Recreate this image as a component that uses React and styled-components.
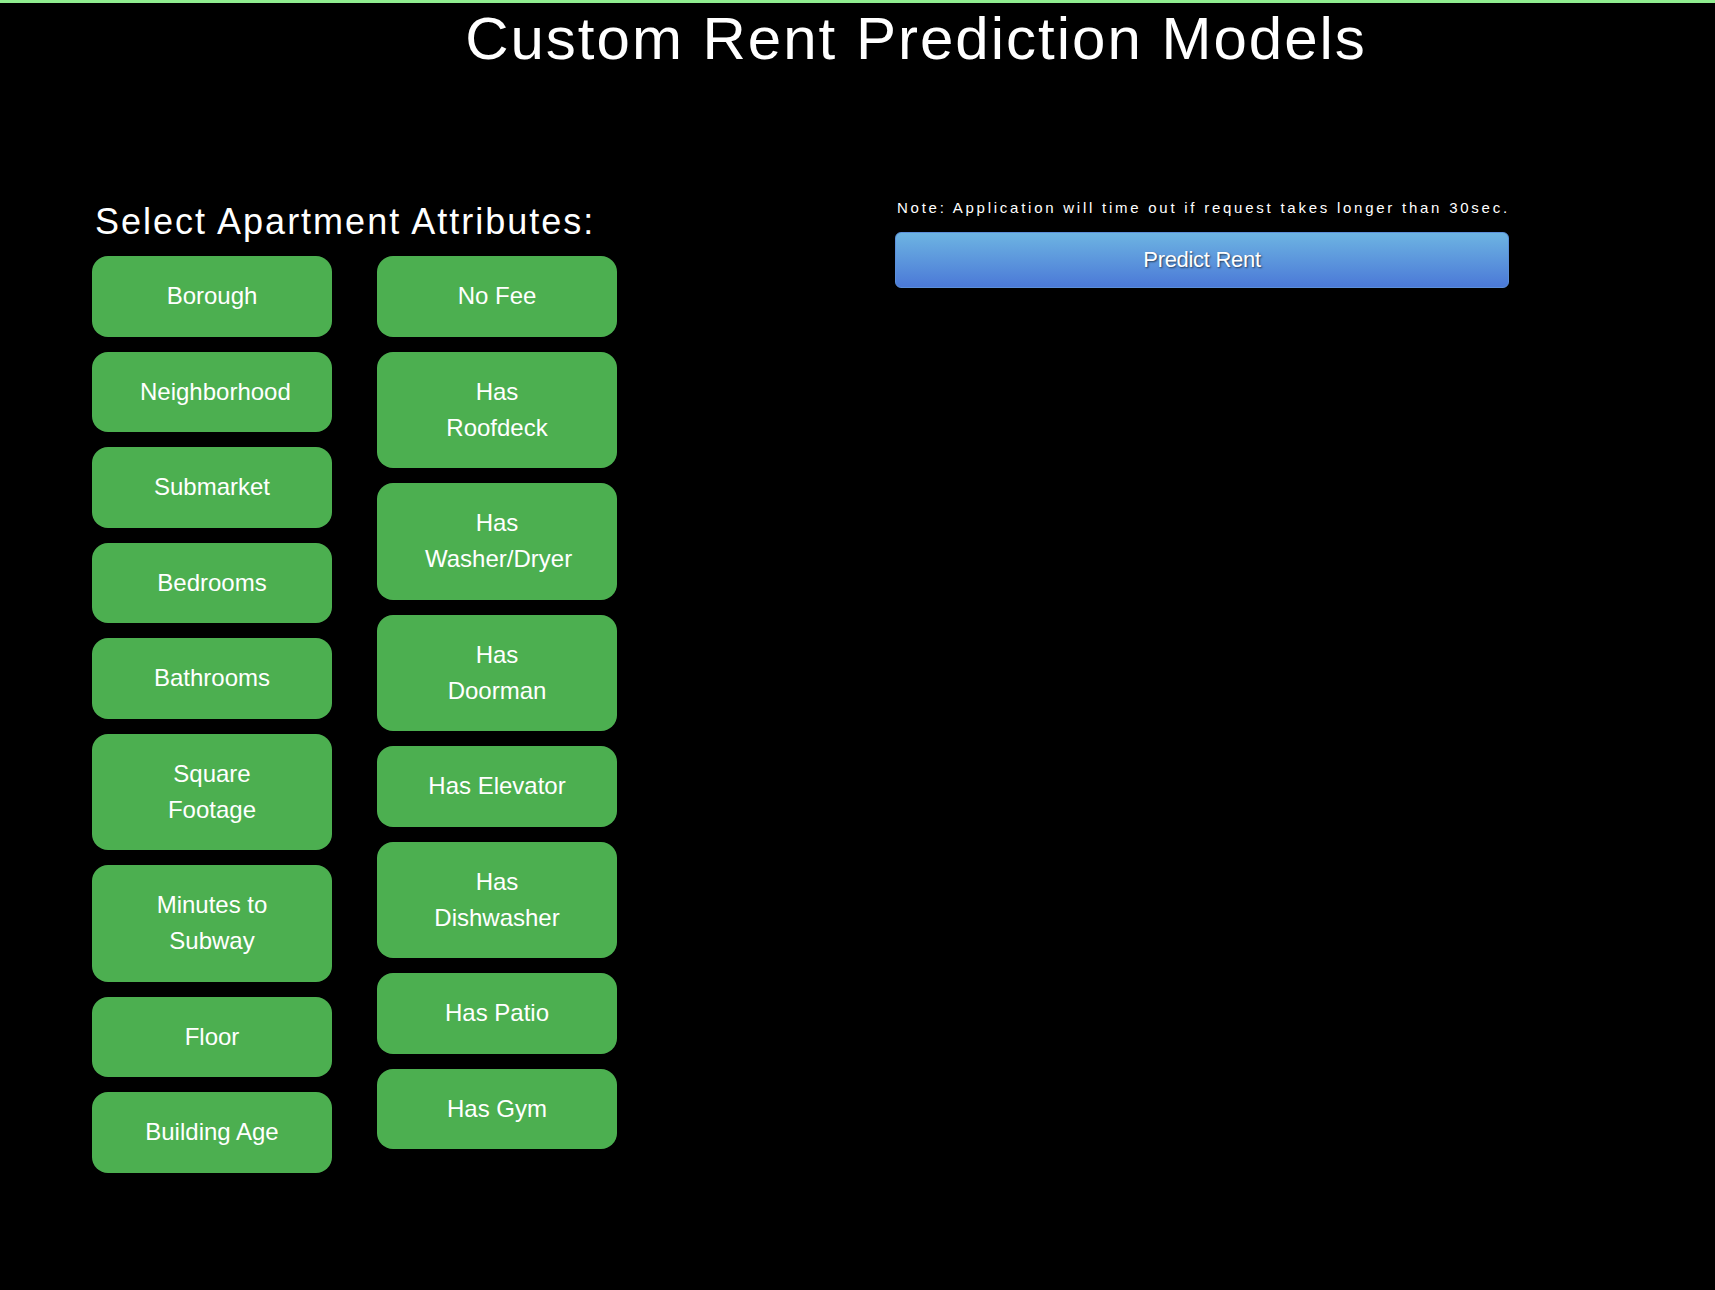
import React from 'react';
import styled, { createGlobalStyle } from 'styled-components';

const GlobalStyle = createGlobalStyle`
  html, body {
    margin: 0;
    padding: 0;
    background: #000000;
  }

  body {
    font-family: 'Liberation Sans', Arial, sans-serif;
    color: #ffffff;
  }
`;

const Page = styled.div`
  min-height: 1290px;
  background: #000000;
  border-top: 3px solid #90ee90;
  box-sizing: border-box;
`;

const Title = styled.h1`
  margin: 0;
  padding-left: 117px;
  font-size: 60px;
  font-weight: normal;
  line-height: 72px;
  letter-spacing: 2px;
  text-align: center;
`;

const Main = styled.div`
  display: flex;
  align-items: flex-start;
  gap: 278px;
  padding: 0 0 0 92px;
  margin-top: 125px;
`;

const Attributes = styled.section`
  display: flex;
  flex-direction: column;
`;

const Heading = styled.h2`
  margin: 0 0 13px 3px;
  font-size: 36px;
  font-weight: normal;
  line-height: 43px;
  letter-spacing: 2px;
`;

const Columns = styled.div`
  display: flex;
  align-items: flex-start;
  gap: 45px;
`;

const Column = styled.div`
  display: flex;
  flex-direction: column;
  gap: 15px;
  width: 240px;
`;

const AttrButton = styled.button`
  box-sizing: border-box;
  width: 240px;
  padding: 22.25px 48px;
  border: none;
  border-radius: 16px;
  background: #4caf50;
  color: #ffffff;
  font-family: 'Liberation Sans', Arial, sans-serif;
  font-size: 24px;
  line-height: 36px;
  text-align: center;
  cursor: pointer;
`;

const Predict = styled.section`
  display: flex;
  flex-direction: column;
  width: 614px;
  margin-top: -1px;
`;

const Note = styled.p`
  margin: 0 0 15px 2px;
  font-size: 15px;
  line-height: 18px;
  letter-spacing: 2.75px;
  white-space: nowrap;
`;

const PredictButton = styled.button`
  box-sizing: border-box;
  width: 614px;
  height: 56px;
  border: 1px solid #5b8fd9;
  border-radius: 6px;
  background: linear-gradient(#6db4e2, #4b79d7);
  color: #ffffff;
  font-family: 'Liberation Sans', Arial, sans-serif;
  font-size: 22px;
  letter-spacing: -0.3px;
  text-shadow: 1px 1px 2px rgba(0, 0, 0, 0.6);
  cursor: pointer;
`;

const leftAttrs = [
  'Borough',
  'Neighborhood',
  'Submarket',
  'Bedrooms',
  'Bathrooms',
  'Square Footage',
  'Minutes to Subway',
  'Floor',
  'Building Age',
];

const rightAttrs = [
  'No Fee',
  'Has Roofdeck',
  'Has Washer/Dryer',
  'Has Doorman',
  'Has Elevator',
  'Has Dishwasher',
  'Has Patio',
  'Has Gym',
];

export default function App() {
  return (
    <>
      <GlobalStyle />
      <Page>
        <Title>Custom Rent Prediction Models</Title>
        <Main>
          <Attributes>
            <Heading>Select Apartment Attributes:</Heading>
            <Columns>
              <Column>
                {leftAttrs.map((a) => (
                  <AttrButton key={a}>{a}</AttrButton>
                ))}
              </Column>
              <Column>
                {rightAttrs.map((a) => (
                  <AttrButton key={a}>{a}</AttrButton>
                ))}
              </Column>
            </Columns>
          </Attributes>
          <Predict>
            <Note>Note: Application will time out if request takes longer than 30sec.</Note>
            <PredictButton>Predict Rent</PredictButton>
          </Predict>
        </Main>
      </Page>
    </>
  );
}
